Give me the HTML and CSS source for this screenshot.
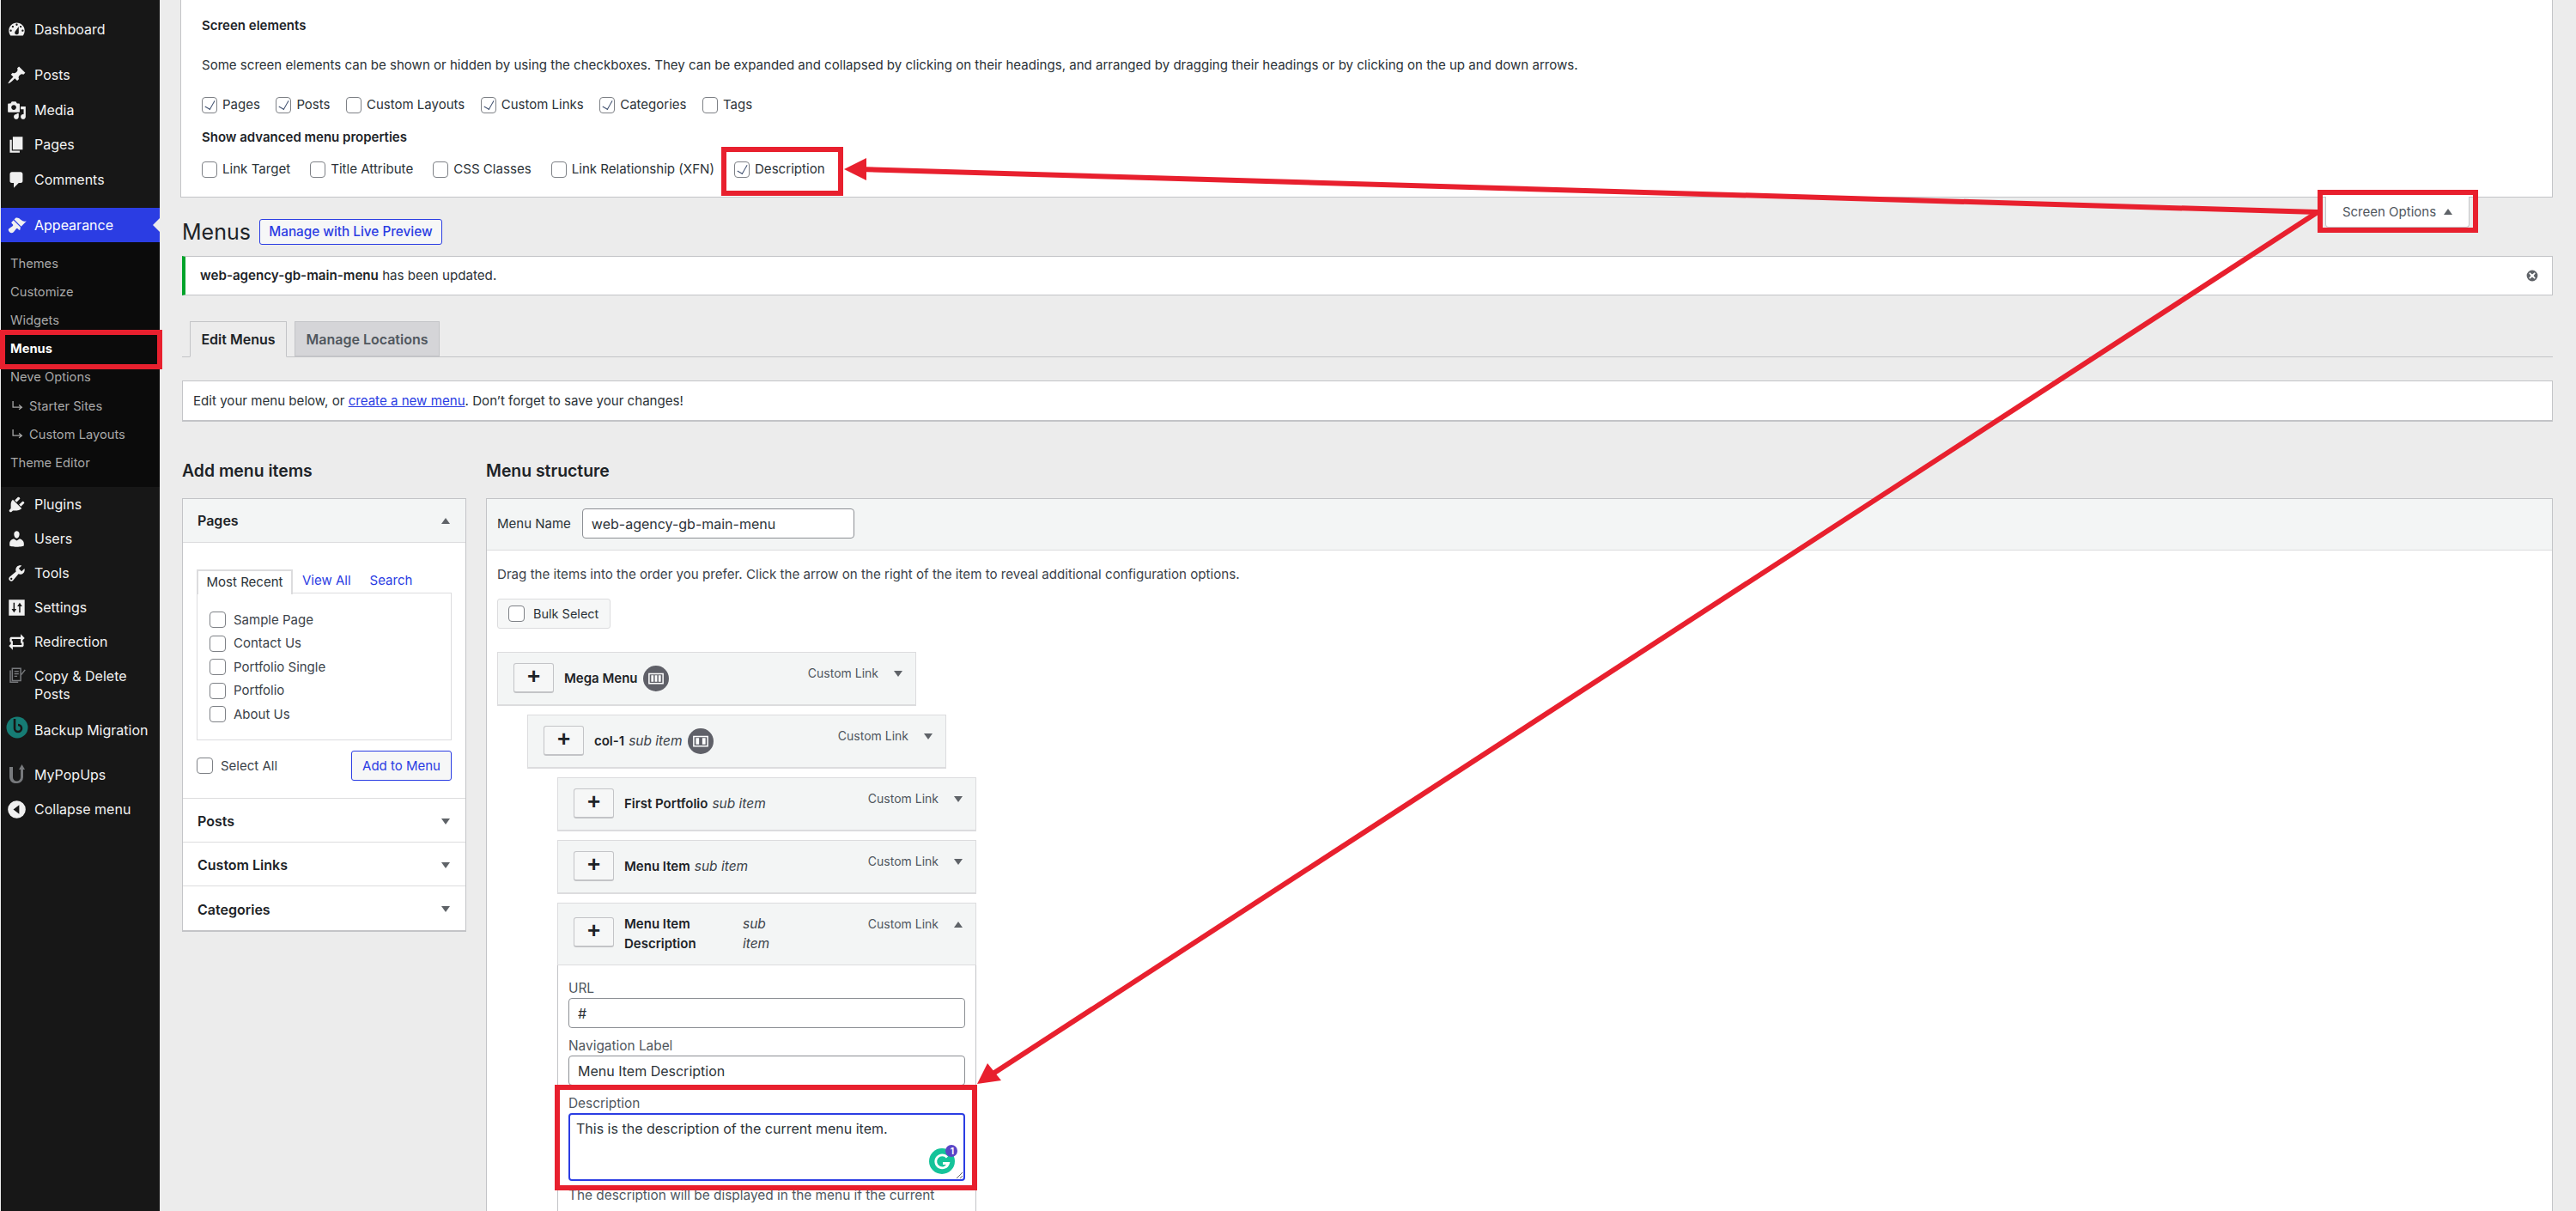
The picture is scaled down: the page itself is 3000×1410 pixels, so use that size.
FILE: index.html
```html
<!DOCTYPE html>
<html lang="en">
<head>
<meta charset="utf-8">
<title>Menus</title>
<link rel="stylesheet" href="styles.css">
</head>
<body>
<div class="page">
  <nav class="sidebar">
    <a class="nav-row nav-first"><svg class="nav-icon" viewBox="0 0 20 20"><path d="M3.76 16h12.48c1.1-1.37 1.76-3.11 1.76-5 0-4.42-3.58-8-8-8s-8 3.58-8 8c0 1.89.66 3.63 1.76 5zM10 4c.55 0 1 .45 1 1s-.45 1-1 1-1-.45-1-1 .45-1 1-1zM6 6c.55 0 1 .45 1 1s-.45 1-1 1-1-.45-1-1 .45-1 1-1zm8 0c.55 0 1 .45 1 1s-.45 1-1 1-1-.45-1-1 .45-1 1-1zm-5.37 5.55L12 7v6c0 1.1-.9 2-2 2s-2-.9-2-2c0-.57.24-1.08.63-1.45zM4 10c.55 0 1 .45 1 1s-.45 1-1 1-1-.45-1-1 .45-1 1-1zm12 0c.55 0 1 .45 1 1s-.45 1-1 1-1-.45-1-1 .45-1 1-1z"/></svg>Dashboard</a>
    <a class="nav-row nav-sep"><svg class="nav-icon" viewBox="0 0 20 20"><path d="M10.44 3.02l1.82-1.82 6.36 6.35-1.83 1.82c-1.05-.68-2.48-.57-3.41.36l-.75.75c-.92.93-1.04 2.35-.35 3.41l-1.83 1.82-2.41-2.41-2.8 2.79c-.42.42-3.38 2.71-3.8 2.29s1.86-3.39 2.28-3.81l2.79-2.79L4.1 9.36l1.83-1.82c1.05.69 2.48.57 3.4-.36l.75-.75c.93-.92 1.05-2.35.36-3.41z"/></svg>Posts</a>
    <a class="nav-row"><svg class="nav-icon" viewBox="0 0 20 20"><path d="M13 11V4c0-.55-.45-1-1-1h-1.67L9 1H5L3.67 3H2c-.55 0-1 .45-1 1v7c0 .55.45 1 1 1h10c.55 0 1-.45 1-1zM7 4.5c1.38 0 2.5 1.12 2.5 2.5S8.38 9.5 7 9.5 4.5 8.38 4.5 7 5.62 4.5 7 4.5zM14 6h5v10.5c0 1.38-1.12 2.5-2.5 2.5S14 17.88 14 16.5s1.12-2.5 2.5-2.5c.17 0 .34.02.5.05V9h-3V6zm-4 8.05V13h2v3.5c0 1.38-1.12 2.5-2.5 2.5S7 17.88 7 16.5 8.12 14 9.5 14c.17 0 .34.02.5.05z"/></svg>Media</a>
    <a class="nav-row"><svg class="nav-icon" viewBox="0 0 20 20"><path d="M6 15V2h10v13H6zm-1 1h8v2H3V5h2v11z"/></svg>Pages</a>
    <a class="nav-row"><svg class="nav-icon" viewBox="0 0 20 20"><path d="M5 2h9c1.1 0 2 .9 2 2v7c0 1.1-.9 2-2 2h-2l-5 5v-5H5c-1.1 0-2-.9-2-2V4c0-1.1.9-2 2-2z"/></svg>Comments</a>
    <a class="nav-row nav-current"><svg class="nav-icon" viewBox="0 0 20 20"><path d="M14.48 11.06L7.41 3.99l1.5-1.5c.5-.56 2.3-.47 3.51.32 1.21.8 1.43 1.28 2.91 2.1 1.18.64 2.45 1.26 4.45.85zm-.71.71L6.7 4.7 4.93 6.47c-.39.39-.39 1.02 0 1.41l1.06 1.06c.39.39.39 1.03 0 1.42-.6.6-1.43 1.11-2.21 1.69-.35.26-.7.53-1.01.84C1.43 13.23.91 14.75 2.53 16.59c1.64 1.64 3.16 1.12 4.5-.12.3-.31.58-.65.84-1 .58-.78 1.09-1.61 1.69-2.21.39-.39 1.02-.39 1.41 0l1.06 1.06c.39.39 1.02.39 1.41 0z"/></svg>Appearance<span class="nav-pointer"></span></a>
    <div class="submenu">
      <a class="sub-row">Themes</a>
      <a class="sub-row">Customize</a>
      <a class="sub-row">Widgets</a>
      <a class="sub-row sub-current">Menus</a>
      <a class="sub-row">Neve Options</a>
      <a class="sub-row"><svg class="sub-hook" viewBox="0 0 12 10"><path d="M1 0v6.500h9M7.500 4L10.500 6.500 7.500 9"/></svg>Starter Sites</a>
      <a class="sub-row"><svg class="sub-hook" viewBox="0 0 12 10"><path d="M1 0v6.500h9M7.500 4L10.500 6.500 7.500 9"/></svg>Custom Layouts</a>
      <a class="sub-row">Theme Editor</a>
    </div>
    <a class="nav-row"><svg class="nav-icon" viewBox="0 0 20 20"><path d="M13.11 4.36L9.87 7.6 8 5.73l3.24-3.24c.35-.34 1.05-.2 1.56.32.52.51.66 1.21.31 1.55zm-8 1.77l.91-1.12 9.01 9.01-1.19.84c-.71.71-2.63 1.16-3.82 1.16H6.14L4.9 17.26c-.59.59-1.54.59-2.12 0-.59-.58-.59-1.53 0-2.12l1.24-1.24v-3.88c0-1.13.4-3.19 1.09-3.89zm7.26 3.97l3.24-3.24c.34-.35 1.04-.21 1.55.31.52.51.66 1.21.31 1.55l-3.24 3.25z"/></svg>Plugins</a>
    <a class="nav-row"><svg class="nav-icon" viewBox="0 0 20 20"><path d="M10 9.25c-2.27 0-2.73-3.44-2.73-3.44C7 4.02 7.82 2 9.97 2c2.16 0 2.98 2.02 2.71 3.81 0 0-.41 3.44-2.68 3.44zm0 2.57L12.72 10c2.39 0 4.52 2.33 4.52 4.53v2.49s-3.65 1.13-7.24 1.13c-3.65 0-7.24-1.13-7.24-1.13v-2.49c0-2.25 1.94-4.48 4.47-4.48z"/></svg>Users</a>
    <a class="nav-row"><svg class="nav-icon" viewBox="0 0 20 20"><path d="M16.68 9.77c-1.34 1.34-3.3 1.67-4.95.99l-5.41 6.52c-.99.99-2.59.99-3.58 0s-.99-2.59 0-3.57l6.52-5.42c-.68-1.65-.35-3.61.99-4.95 1.28-1.28 3.12-1.62 4.72-1.06l-2.89 2.89 2.82 2.82 2.86-2.87c.53 1.58.18 3.39-1.08 4.65zM3.81 16.21c.4.39 1.04.39 1.43 0 .4-.4.4-1.04 0-1.43-.39-.4-1.03-.4-1.43 0-.39.39-.39 1.03 0 1.43z"/></svg>Tools</a>
    <a class="nav-row"><svg class="nav-icon" viewBox="0 0 20 20"><path fill-rule="evenodd" d="M2 2h16v16H2zM6.600 5h1.300v6.300h1.800L7.250 15 4.800 11.300h1.800zM13 5l2.450 3.700h-1.800V15h-1.300V8.700h-1.800z"/></svg>Settings</a>
    <a class="nav-row"><svg class="nav-icon" viewBox="0 0 20 20"><path d="M4 5h10V2l4 4-2 2v3h-2V7H5v3H3V6zM16 15H6v3l-4-4 2-2V9h2v4h9v-3h2v4z"/></svg>Redirection</a>
    <a class="nav-row nav-tall"><svg class="nav-icon nav-icon-top" viewBox="0 0 20 20" fill="none" stroke="#77797c" stroke-width="1.300"><path d="M5.500 4.500h8.500v12.500H5.500z"/><path d="M3.500 6.500v12h8M7.500 7.500h4.500M7.500 10h4.500M7.500 12.500h3M14.500 11l4-5"/></svg><span class="nav-tall-text">Copy &amp; Delete Posts</span></a>
    <a class="nav-row"><svg class="nav-icon nav-icon-big" viewBox="0 0 26 26"><circle cx="13" cy="13" r="12.500" fill="#167c74"/><path d="M10 3v11a4 4 0 1 0 4-4" fill="none" stroke="#171717" stroke-width="2.600"/></svg>Backup Migration</a>
    <a class="nav-row nav-sep"><svg class="nav-icon nav-icon-big" viewBox="0 0 26 26"><path d="M4 6h4v12a4 4 0 0 0 9 0V9h-2l3.500-6L22 9h-2v9a7 7 0 0 1-8 7H10a7 7 0 0 1-6-7z" fill="#77797c"/></svg>MyPopUps</a>
    <a class="nav-row"><svg class="nav-icon" viewBox="0 0 20 20"><path d="M10 1a9 9 0 1 1 0 18 9 9 0 0 1 0-18zm2.500 4.500L6.500 10l6 4.500z"/></svg>Collapse menu</a>
  </nav>

  <main class="main">
    <section class="screen-meta">
      <h5 class="meta-title">Screen elements</h5>
      <p class="meta-text">Some screen elements can be shown or hidden by using the checkboxes. They can be expanded and collapsed by clicking on their headings, and arranged by dragging their headings or by clicking on the up and down arrows.</p>
      <div class="check-row">
        <label class="check"><input type="checkbox" checked>Pages</label>
        <label class="check"><input type="checkbox" checked>Posts</label>
        <label class="check"><input type="checkbox">Custom Layouts</label>
        <label class="check"><input type="checkbox" checked>Custom Links</label>
        <label class="check"><input type="checkbox" checked>Categories</label>
        <label class="check"><input type="checkbox">Tags</label>
      </div>
      <h5 class="meta-title meta-title-adv">Show advanced menu properties</h5>
      <div class="check-row check-row-adv">
        <label class="check"><input type="checkbox">Link Target</label>
        <label class="check"><input type="checkbox">Title Attribute</label>
        <label class="check"><input type="checkbox">CSS Classes</label>
        <label class="check"><input type="checkbox">Link Relationship (XFN)</label>
        <label class="check"><input type="checkbox" checked>Description</label>
      </div>
      <button class="screen-tab">Screen Options<span class="caret caret-up"></span></button>
    </section>

    <header class="heading">
      <h1 class="heading-title">Menus</h1>
      <a class="btn-outline">Manage with Live Preview</a>
    </header>

    <div class="notice">
      <p><strong>web-agency-gb-main-menu</strong> has been updated.</p>
      <svg class="notice-close" viewBox="0 0 20 20"><path fill="#5f6368" d="M10 2a8 8 0 1 1 0 16 8 8 0 0 1 0-16zm3.500 3.300L10 8 6.500 5.300 5.300 6.500 8 10l-2.700 3.500 1.200 1.200L10 12l3.500 2.700 1.200-1.200L12 10l2.700-3.500z"/></svg>
    </div>

    <div class="tabs">
      <a class="tab tab-active">Edit Menus</a>
      <a class="tab">Manage Locations</a>
    </div>

    <div class="manage-box">Edit your menu below, or <a class="link">create a new menu</a>. Don’t forget to save your changes!</div>

    <div class="columns">
      <div class="col-left">
        <h2 class="col-title">Add menu items</h2>
        <div class="accordion">
          <div class="acc-head acc-open"><span>Pages</span><span class="caret caret-up"></span></div>
          <div class="acc-body">
            <div class="mini-tabs">
              <a class="mini-tab mini-tab-active">Most Recent</a>
              <a class="mini-tab">View All</a>
              <a class="mini-tab">Search</a>
            </div>
            <div class="mini-box">
              <label class="page-check"><input type="checkbox">Sample Page</label>
              <label class="page-check"><input type="checkbox">Contact Us</label>
              <label class="page-check"><input type="checkbox">Portfolio Single</label>
              <label class="page-check"><input type="checkbox">Portfolio</label>
              <label class="page-check"><input type="checkbox">About Us</label>
            </div>
            <div class="acc-actions">
              <label class="page-check"><input type="checkbox">Select All</label>
              <a class="btn-outline btn-add">Add to Menu</a>
            </div>
          </div>
          <div class="acc-head"><span>Posts</span><span class="caret"></span></div>
          <div class="acc-head"><span>Custom Links</span><span class="caret"></span></div>
          <div class="acc-head acc-last"><span>Categories</span><span class="caret"></span></div>
        </div>
      </div>

      <div class="col-right">
        <h2 class="col-title">Menu structure</h2>
        <div class="structure">
          <div class="structure-head">
            <span>Menu Name</span>
            <input class="field field-name" type="text" value="web-agency-gb-main-menu">
          </div>
          <div class="structure-body">
            <p class="structure-help">Drag the items into the order you prefer. Click the arrow on the right of the item to reveal additional configuration options.</p>
            <label class="bulk"><input type="checkbox">Bulk Select</label>

            <div class="item">
              <button class="plus">+</button>
              <div class="item-title"><strong>Mega Menu</strong>
                <span class="badge"><svg viewBox="0 0 16 16"><path fill="none" stroke="#fff" stroke-width="1.200" d="M1.500 3.500h13v9h-13z"/><path fill="#fff" d="M3.500 5h2.200v6H3.500zM6.900 5h2.200v6H6.900zM10.300 5h2.200v6h-2.200z"/></svg></span>
              </div>
              <div class="item-controls"><span>Custom Link</span><span class="caret"></span></div>
            </div>

            <div class="item depth-1">
              <button class="plus">+</button>
              <div class="item-title"><strong>col-1</strong> <em>sub item</em>
                <span class="badge"><svg viewBox="0 0 16 16"><path fill="none" stroke="#fff" stroke-width="1.200" d="M1.500 3.500h13v9h-13z"/><path fill="#fff" d="M3.500 5h3v6h-3zM9.500 5h3v6h-3z"/></svg></span>
              </div>
              <div class="item-controls"><span>Custom Link</span><span class="caret"></span></div>
            </div>

            <div class="item depth-2">
              <button class="plus">+</button>
              <div class="item-title"><strong>First Portfolio</strong> <em>sub item</em></div>
              <div class="item-controls"><span>Custom Link</span><span class="caret"></span></div>
            </div>

            <div class="item depth-2">
              <button class="plus">+</button>
              <div class="item-title"><strong>Menu Item</strong> <em>sub item</em></div>
              <div class="item-controls"><span>Custom Link</span><span class="caret"></span></div>
            </div>

            <div class="item depth-2 item-open">
              <button class="plus">+</button>
              <div class="item-title item-title-wrap"><strong>Menu Item Description</strong><em>sub item</em></div>
              <div class="item-controls"><span>Custom Link</span><span class="caret caret-up"></span></div>
            </div>
            <div class="item-settings depth-2">
              <label class="setting">URL<input class="field" type="text" value="#"></label>
              <label class="setting">Navigation Label<input class="field" type="text" value="Menu Item Description"></label>
              <label class="setting">Description
                <span class="area-wrap">
                  <textarea class="field field-area">This is the description of the current menu item.</textarea>
                  <span class="grammarly"><svg viewBox="0 0 34 34"><circle cx="15" cy="19" r="15" fill="#15c39a"/><path d="M21 14.500a7.500 7.500 0 1 0 1.500 7h-6.500" fill="none" stroke="#fff" stroke-width="2.800"/><circle cx="26" cy="7" r="7" fill="#5a45c7"/></svg><span class="grammarly-count">1</span></span>
                </span>
              </label>
              <p class="setting-help">The description will be displayed in the menu if the current</p>
            </div>
          </div>
        </div>
      </div>
    </div>
  </main>
</div>

<svg class="annotations" viewBox="0 0 3000 1410" fill="none" stroke="#e8202e" stroke-width="6">
  <rect x="3" y="387" width="183" height="40"/>
  <rect x="843" y="174" width="136" height="51"/>
  <rect x="2702" y="224" width="181" height="44"/>
  <rect x="649" y="1266" width="486" height="117"/>
  <path stroke-width="6" d="M2699 247L1000 197"/>
  <path stroke-width="6" d="M2699 247L1155 1251"/>
  <path fill="#e8202e" stroke="none" d="M983 197L1009 184V210z"/>
  <path fill="#e8202e" stroke="none" d="M1138 1262L1150 1238 1166 1258z"/>
</svg>
</body>
</html>
```
FILE: styles.css
```css
* { box-sizing: border-box; }
html, body { margin: 0; height: 100%; }
body {
  background: #ececec;
  color: #2c3338;
  font: 14px/20px Inter, "Liberation Sans", sans-serif;
  overflow: hidden;
}
h1, h2, h5, p { margin: 0; }
.page { display: flex; height: 1410px; overflow: hidden; }

/* sidebar */
.sidebar {
  flex: 0 0 185px;
  margin-left: 1px;
  padding-top: 14px;
  background: #171717;
  color: #f2f2f2;
  font-size: 16px;
}
.nav-row {
  position: relative;
  display: flex;
  align-items: center;
  height: 40.500px;
  padding-left: 39px;
}
.submenu ~ .nav-row { height: 40.200px; }
.nav-first { height: 40px; }
.nav-sep { margin-top: 13px; }
.submenu ~ .nav-sep { margin-top: 12px; }
.nav-current { margin-top: 13px; height: 40px; background: #2b3de3; color: #fff; }
.nav-pointer {
  position: absolute;
  right: 0;
  top: 12px;
  border: 8px solid transparent;
  border-right-color: #ececec;
}
.nav-icon {
  position: absolute;
  left: 7px;
  top: 9px;
  width: 23px;
  height: 23px;
  fill: #f0f0f0;
}
.nav-icon[fill="none"] { fill: none; }
.nav-icon-top { top: 6px; }
.nav-icon-big { left: 6px; top: 5px; width: 26px; height: 26px; }
.submenu ~ .nav-tall { height: 62px; line-height: 21px; }
.nav-tall-text { display: block; }
.submenu {
  padding: 8px 0 11px;
  background: #0b0b0b;
  color: #a8a8a8;
  font-size: 14.700px;
}
.sub-row { display: flex; align-items: center; height: 33.200px; padding-left: 11px; }
.sub-current { color: #fff; font-weight: 700; }
.sub-hook {
  flex: none;
  width: 13px;
  height: 11px;
  margin: 0 7px 0 2px;
  fill: none;
  stroke: #a8a8a8;
  stroke-width: 1.200;
}

/* main */
.main { flex: 1; min-width: 0; padding: 0 27px 0 26px; }
.screen-meta {
  position: relative;
  height: 230px;
  margin-left: -2px;
  padding: 20px 24px 0;
  background: #fff;
  border: 1px solid #c3c4c7;
  border-top: 0;
  color: #2c3338;
}
.meta-title { font-size: 15px; line-height: 20px; font-weight: 600; color: #1d2327; }
.meta-text { margin-top: 26px; font-size: 15.050px; }
.check-row { display: flex; gap: 18.500px; margin-top: 26px; font-size: 15px; }
.meta-title-adv { margin-top: 18px; }
.check-row-adv { gap: 23px; margin-top: 17px; font-size: 15.100px; }
.check { display: flex; align-items: center; gap: 6px; }
input[type="checkbox"] {
  appearance: none;
  position: relative;
  flex: none;
  width: 19px;
  height: 19px;
  margin: 0;
  background: #fff;
  border: 1px solid #7e8186;
  border-radius: 4px;
}
.check input[type="checkbox"] { width: 18px; }
input[type="checkbox"]:checked::before {
  content: "";
  position: absolute;
  left: 5px;
  top: 1.500px;
  width: 6px;
  height: 11px;
  border: solid #3f4f6e;
  border-width: 0 1.500px 1.500px 0;
  transform: rotate(30deg);
}
.screen-tab {
  position: absolute;
  right: 96px;
  top: 100%;
  display: flex;
  align-items: center;
  justify-content: center;
  gap: 9px;
  width: 168px;
  height: 36px;
  margin-top: 0;
  padding: 0;
  background: #fff;
  border: 1px solid #c3c4c7;
  border-top: 0;
  border-radius: 0 0 4px 4px;
  color: #50575e;
  font: 15px Inter, sans-serif;
}
.caret {
  display: inline-block;
  width: 0;
  height: 0;
  border: 5px solid transparent;
  border-top: 7px solid #5f6368;
  border-bottom: 0;
}
.caret-up { border-top: 0; border-bottom: 7px solid #5f6368; }

.heading { display: flex; align-items: center; gap: 10px; height: 30px; margin-top: 25px; }
.heading-title { font-size: 25px; font-weight: 400; color: #1d2327; }
.btn-outline {
  display: flex;
  align-items: center;
  justify-content: center;
  background: #f6f7f7;
  border: 1px solid #2b3de3;
  border-radius: 3px;
  color: #2b3de3;
  font-size: 14.500px;
}
.heading .btn-outline { width: 213px; height: 30px; font-size: 15.300px; font-weight: 500; }
.notice {
  display: flex;
  align-items: center;
  justify-content: space-between;
  height: 46px;
  margin-top: 13px;
  padding: 0 15px 0 17px;
  background: #fff;
  border: 1px solid #c3c4c7;
  border-left: 4px solid #00a32a;
  font-size: 15.150px;
}
.notice strong { font-weight: 600; color: #1d2327; }
.notice-close { width: 16px; height: 16px; }
.tabs {
  display: flex;
  gap: 9px;
  height: 42px;
  margin-top: 30px;
  padding-left: 9px;
  border-bottom: 1px solid #c3c4c7;
}
.tab {
  display: flex;
  align-items: center;
  justify-content: center;
  width: 169px;
  height: 41px;
  background: #d5d5d8;
  border: 1px solid #c3c4c7;
  color: #50575e;
  font-size: 16px;
  font-weight: 600;
}
.tab-active {
  width: 113px;
  height: 42px;
  background: #ececec;
  border-bottom-color: #ececec;
  color: #1d2327;
}
.manage-box {
  height: 48px;
  margin-top: 27px;
  padding: 0 12px;
  background: #fff;
  border: 1px solid #c3c4c7;
  border-bottom-width: 2px;
  font-size: 15.100px;
  line-height: 46px;
}
.link { color: #2b3de3; text-decoration: underline; }
.columns { display: flex; gap: 23px; margin-top: 45px; }
.col-left { flex: 0 0 331px; }
.col-right { flex: 1; min-width: 0; }
.col-title { height: 24px; margin-bottom: 20px; font-size: 19.400px; line-height: 24px; font-weight: 600; color: #1d2327; }

/* accordion */
.accordion { background: #fff; border: 1px solid #c3c4c7; border-bottom-width: 2px; }
.acc-head {
  display: flex;
  align-items: center;
  justify-content: space-between;
  height: 51px;
  padding: 2px 18px 0 17px;
  border-bottom: 1px solid #dcdcde;
  color: #1d2327;
  font-size: 16px;
  font-weight: 600;
}
.acc-open { padding-top: 0; background: #f3f5f5; }
.acc-last { border-bottom: 0; }
.acc-body { height: 298px; padding: 30px 16px 0; border-bottom: 1px solid #dcdcde; }
.mini-tabs { display: flex; height: 28px; align-items: center; gap: 22px; color: #2b3de3; font-size: 15px; }
.mini-tab-active {
  display: flex;
  align-items: center;
  justify-content: center;
  width: 112px;
  height: 29px;
  margin-right: -11px;
  background: #fff;
  border: 1px solid #dcdcde;
  border-width: 2px 2px 0;
  color: #2c3338;
  position: relative;
  top: 1px;
}
.mini-box {
  display: flex;
  flex-direction: column;
  justify-content: space-between;
  height: 172px;
  padding: 21px 14px 20px;
  border: 1px solid #dcdcde;
}
.page-check { display: flex; align-items: center; gap: 9px; height: 19px; font-size: 15px; color: #3c434a; }
.acc-actions { display: flex; align-items: center; justify-content: space-between; height: 35px; margin-top: 12px; }
.btn-add { width: 117px; height: 35px; font-size: 15px; }

/* structure */
.structure { min-height: 900px; background: #fff; border: 1px solid #c3c4c7; }
.structure-head {
  display: flex;
  align-items: center;
  gap: 13px;
  height: 60px;
  padding: 0 12px 2px;
  background: #f3f5f5;
  border-bottom: 1px solid #dcdcde;
  font-size: 15px;
}
.field {
  display: block;
  width: 100%;
  height: 35px;
  padding: 0 10px;
  background: #fff;
  border: 1px solid #8c8f94;
  border-radius: 4px;
  color: #2c3338;
  font: 16px Inter, sans-serif;
  outline: 0;
}
.field-name { flex: none; width: 317px; }
.structure-body { padding: 18px 12px 0; }
.structure-help { font-size: 15.130px; color: #3c434a; }
.bulk {
  display: flex;
  align-items: center;
  gap: 10px;
  width: 132px;
  height: 35px;
  margin-top: 18px;
  padding-left: 12px;
  background: #f6f7f7;
  border: 1px solid #dcdcde;
  border-radius: 3px;
  font-size: 14.500px;
}
.bulk + .item { margin-top: 27px; }
.item {
  display: flex;
  align-items: flex-start;
  width: 488px;
  height: 63px;
  margin-top: 10px;
  padding: 12px 15px 0 18px;
  background: #f3f5f5;
  border: 1px solid #dcdcde;
  border-width: 1px 1px 2px;
}
.depth-1 { margin-left: 35px; }
.depth-2 { margin-left: 70px; }
.plus {
  flex: none;
  width: 47px;
  height: 35px;
  padding: 0 0 4px;
  background: #f6f7f7;
  border: 1px solid #c3c4c7;
  border-bottom-width: 2px;
  border-radius: 3px;
  color: #1d2327;
  font: 700 26px/1 "Liberation Sans", sans-serif;
}
.item-title {
  display: flex;
  align-items: center;
  flex: 1;
  gap: 5px;
  height: 35px;
  margin-left: 12px;
  font-size: 15px;
  color: #1d2327;
  white-space: nowrap;
}
.item-title strong { font-weight: 600; }
.item-title em { font-size: 15.500px; color: #3c434a; }
.badge {
  display: flex;
  align-items: center;
  justify-content: center;
  width: 30px;
  height: 30px;
  margin-left: 1px;
  background: #5f6068;
  border-radius: 50%;
}
.badge svg { width: 20px; height: 20px; }
.item-controls { display: flex; align-items: center; gap: 18px; line-height: 24px; font-size: 14px; color: #50575e; }
.item-open { height: 73px; padding-bottom: 0; border-bottom-width: 1px; }
.item-open .plus { margin-top: 4px; }
.item-title-wrap { align-items: flex-start; gap: 0; height: auto; line-height: 23px; white-space: normal; }
.item-title-wrap strong { flex: 0 0 138px; padding-right: 40px; }
.item-title-wrap em { flex: 0 0 40px; }
.item-settings {
  width: 488px;
  height: 400px;
  padding: 17px 12px 0;
  background: #fff;
  border: 1px solid #c3c4c7;
  border-top: 0;
}
.setting { display: block; margin-bottom: 11px; font-size: 15.400px; color: #50575e; }
.setting .field { margin-top: 1px; }
.area-wrap { position: relative; display: block; margin-top: 1px; }
.field-area {
  height: 79px;
  padding: 6px 7px;
  border: 2px solid #2b3de3;
  line-height: 20px;
  resize: both;
}
.grammarly { position: absolute; right: 8px; bottom: 8px; width: 34px; height: 34px; }
.grammarly svg { display: block; }
.grammarly-count {
  position: absolute;
  right: 5px;
  top: -3px;
  color: #fff;
  font-size: 10px;
  font-weight: 700;
  line-height: 20px;
}
.setting-help { margin-top: -4px; font-size: 15.400px; color: #50575e; }

/* annotation layer */
.annotations { position: absolute; left: 0; top: 0; width: 3000px; height: 1410px; pointer-events: none; }
```
